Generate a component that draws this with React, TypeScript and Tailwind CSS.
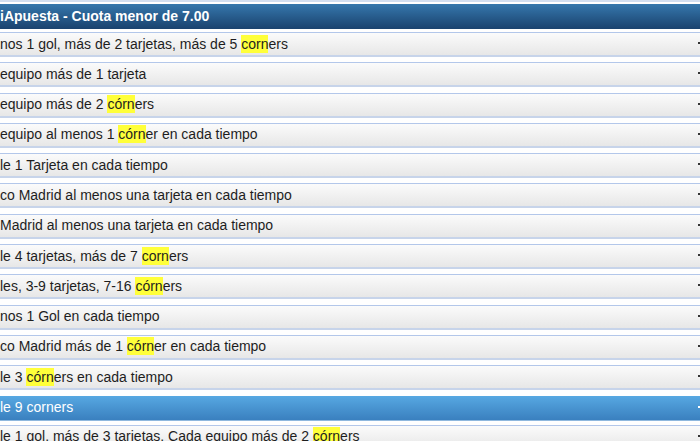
import React from "react";

type Part = { t: string; hl?: boolean };

const rows: Part[][] = [
  [{ t: "nos 1 gol, más de 2 tarjetas, más de 5 " }, { t: "corn", hl: true }, { t: "ers" }],
  [{ t: "equipo más de 1 tarjeta" }],
  [{ t: "equipo más de 2 " }, { t: "córn", hl: true }, { t: "ers" }],
  [{ t: "equipo al menos 1 " }, { t: "córn", hl: true }, { t: "er en cada tiempo" }],
  [{ t: "le 1 Tarjeta en cada tiempo" }],
  [{ t: "co Madrid al menos una tarjeta en cada tiempo" }],
  [{ t: "Madrid al menos una tarjeta en cada tiempo" }],
  [{ t: "le 4 tarjetas, más de 7 " }, { t: "corn", hl: true }, { t: "ers" }],
  [{ t: "les, 3-9 tarjetas, 7-16 " }, { t: "córn", hl: true }, { t: "ers" }],
  [{ t: "nos 1 Gol en cada tiempo" }],
  [{ t: "co Madrid más de 1 " }, { t: "córn", hl: true }, { t: "er en cada tiempo" }],
  [{ t: "le 3 " }, { t: "córn", hl: true }, { t: "ers en cada tiempo" }],
];

const last: Part[] = [
  { t: "le 1 gol, más de 3 tarjetas, Cada equipo más de 2 " },
  { t: "córn", hl: true },
  { t: "ers" },
];

function Row({ parts }: { parts: Part[] }) {
  return (
    <div className="border-t border-b-2 border-t-[#b3c7ea] border-b-[#c7d4ea] mb-[5.3px]">
      <div className="relative h-[22px] flex items-center bg-gradient-to-b from-[#fbfbfb] to-[#e7e7e7] text-[14px] text-[#1e1e1e] whitespace-nowrap pl-0">
        <span>
          {parts.map((p, i) =>
            p.hl ? (
              <span key={i} className="bg-[#ffff3a] py-[1px]">
                {p.t}
              </span>
            ) : (
              <span key={i}>{p.t}</span>
            )
          )}
        </span>
        <span className="absolute right-0 top-[9px] w-[2px] h-[2px] bg-[#333]" />
      </div>
    </div>
  );
}

export default function App() {
  return (
    <div
      className="w-[700px] h-[441px] overflow-hidden bg-white"
      style={{ fontFamily: '"Liberation Sans", Arial, sans-serif' }}
    >
      <div className="h-[2px] bg-[#d3dff0]" />
      <div className="h-[2px]" />
      <div className="h-[25px] flex items-center bg-gradient-to-b from-[#3678ad] to-[#1a426e] text-white font-bold text-[14px] whitespace-nowrap">
        iApuesta - Cuota menor de 7.00
      </div>
      <div className="h-[3px]" />
      {rows.map((r, i) => (
        <Row key={i} parts={r} />
      ))}
      <div className="relative h-[25px] flex items-center bg-gradient-to-b from-[#57a8e2] to-[#3a80bf] text-white text-[14px] whitespace-nowrap border-b border-b-[#8fb8de]">
        le 9 corners
        <span className="absolute right-0 top-[10px] w-[2px] h-[2px] bg-white" />
      </div>
      <div className="h-[4px]" />
      <Row parts={last} />
    </div>
  );
}
